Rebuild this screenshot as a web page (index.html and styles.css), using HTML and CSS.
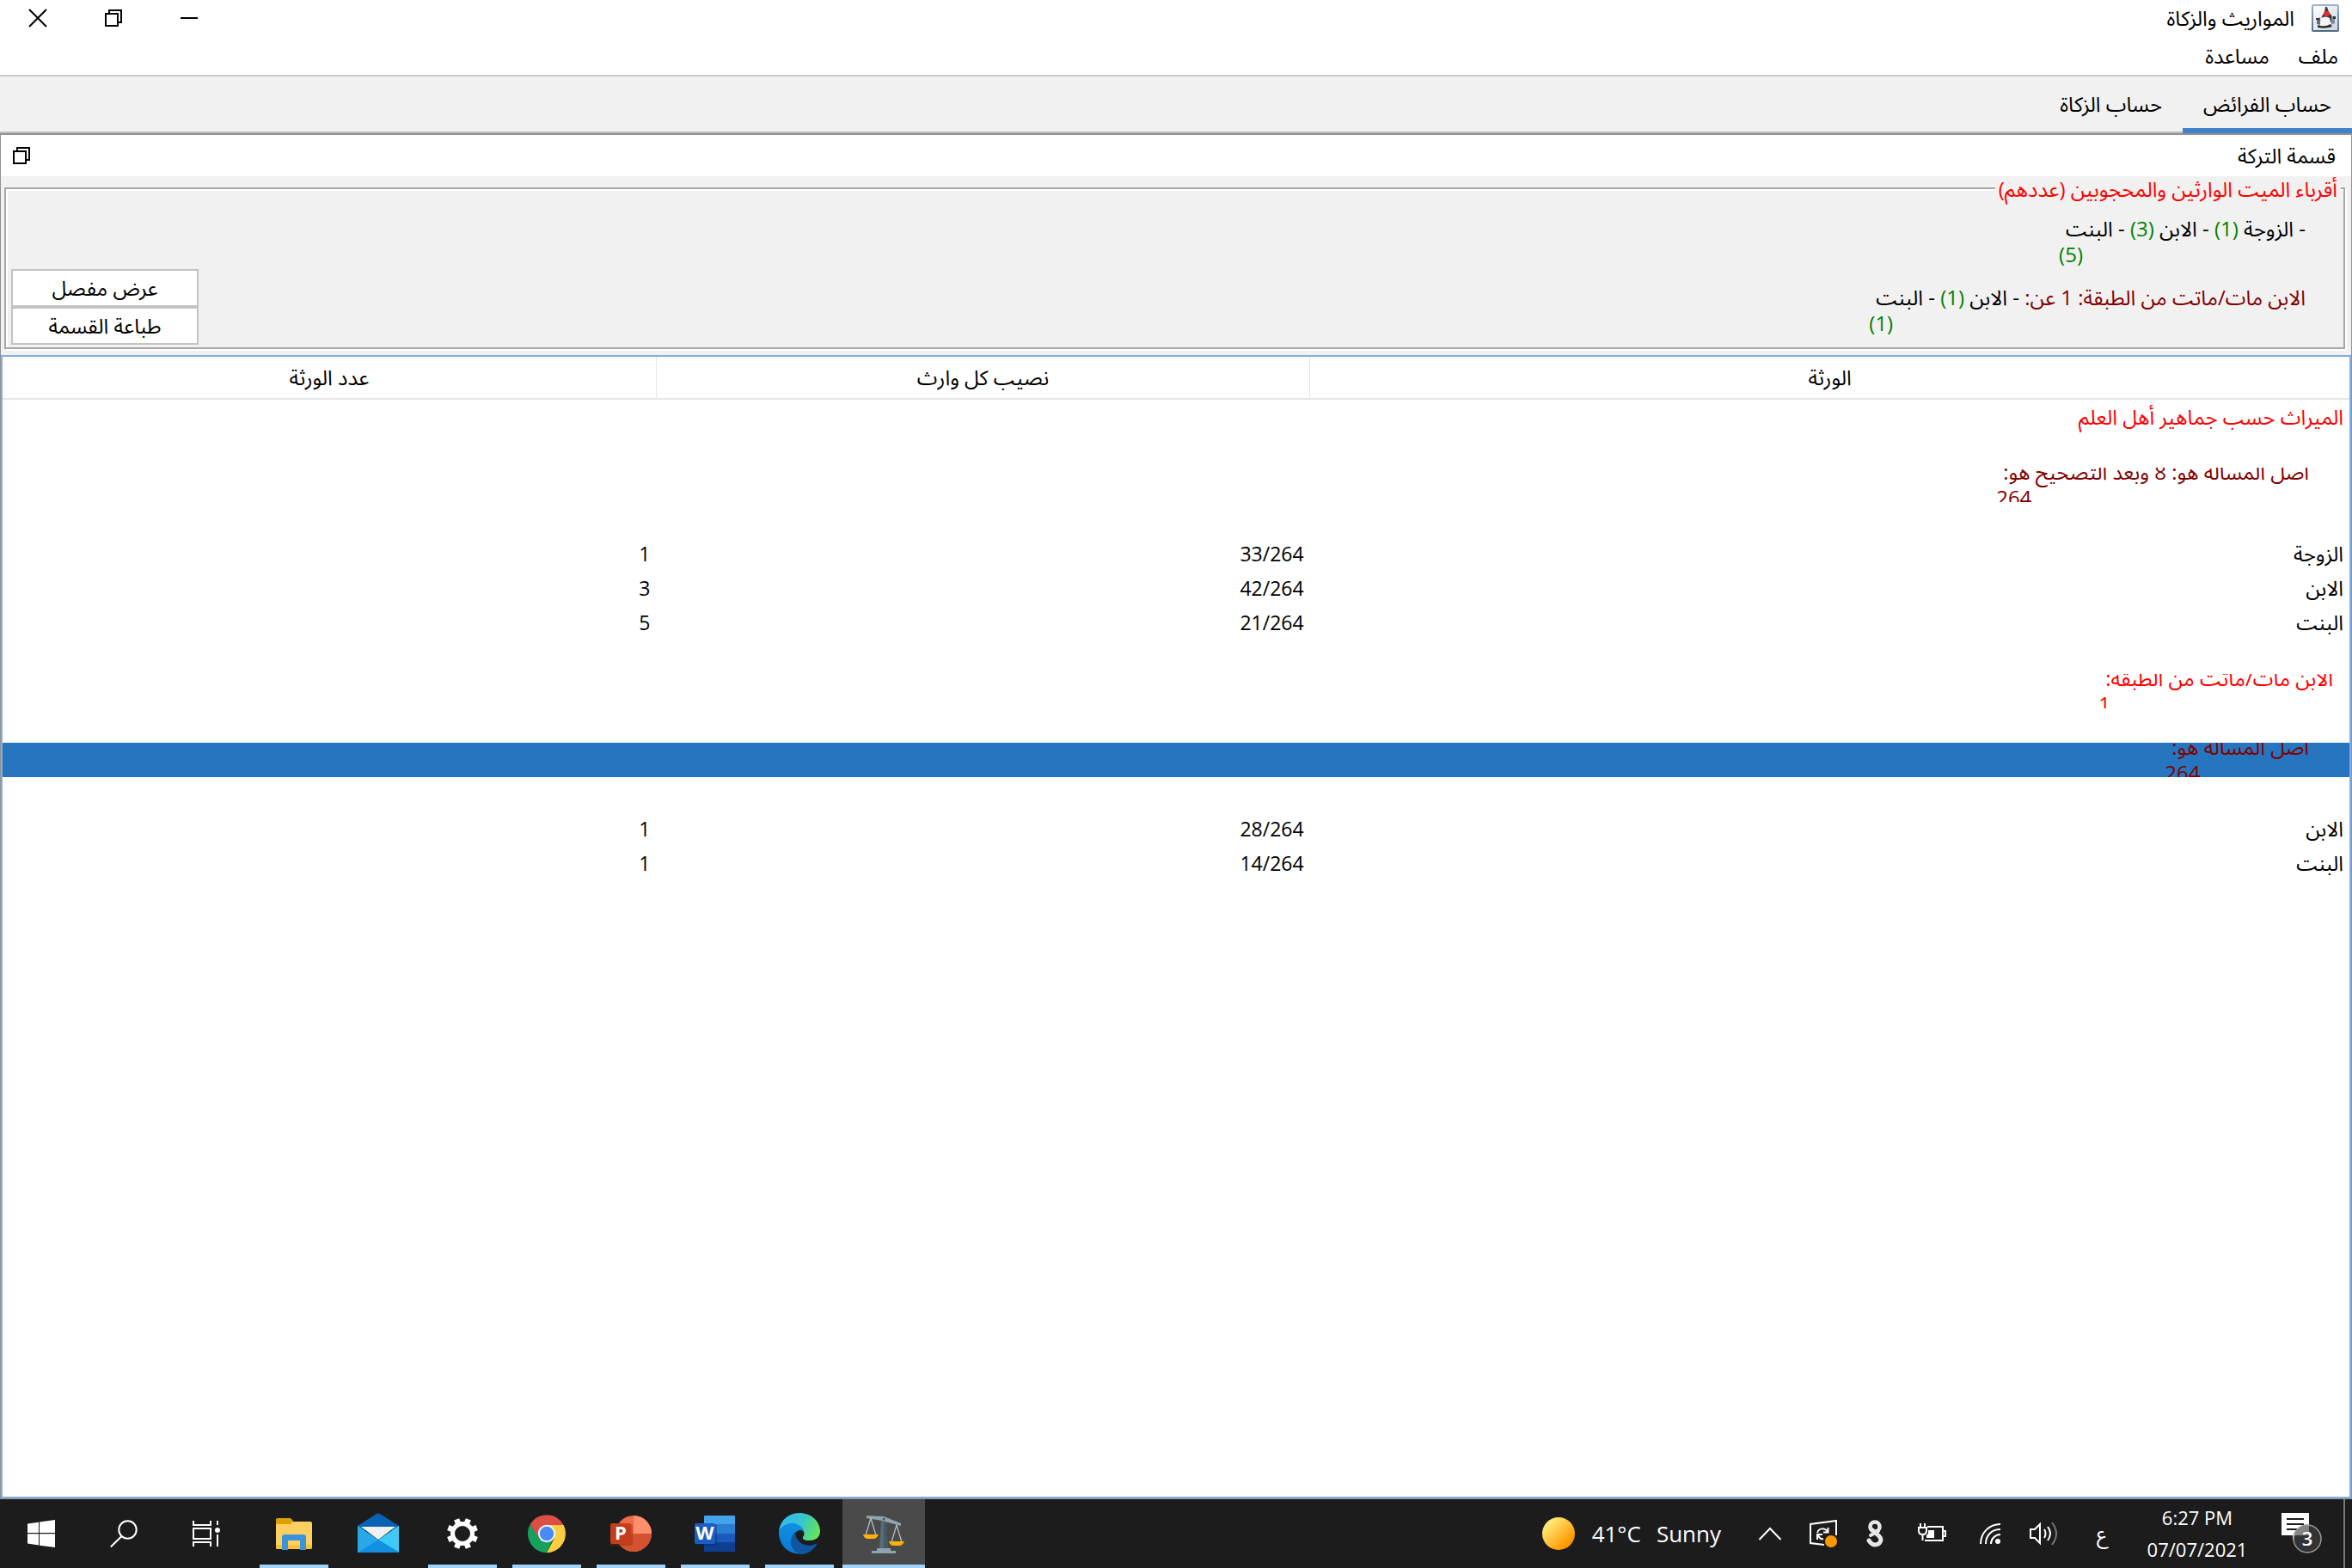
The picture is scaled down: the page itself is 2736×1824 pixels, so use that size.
FILE: index.html
```
<!DOCTYPE html>
<html lang="ar" dir="rtl">
<head>
<meta charset="utf-8">
<title>المواريث والزكاة</title>
<link rel="stylesheet" href="styles.css">
</head>
<body>
<header class="titlebar">
  <div class="app-name">
    <svg class="app-icon" width="32" height="32" viewBox="0 0 32 32" aria-hidden="true">
      <defs><linearGradient id="frame" x1="0" y1="0" x2="0" y2="1"><stop offset="0" stop-color="#9db4cb"/><stop offset="1" stop-color="#4c6a88"/></linearGradient>
      <linearGradient id="paper" x1="0" y1="0" x2="1" y2="1"><stop offset="0" stop-color="#fff"/><stop offset="1" stop-color="#cfd6dd"/></linearGradient></defs>
      <rect width="32" height="32" rx="2" fill="url(#frame)"/>
      <rect x="2" y="2" width="28" height="28" fill="url(#paper)"/>
      <path d="M16 3h2l2 6 4 5 2 5-4 2H10l2-7 3-5z" fill="#3a3a3a"/>
      <path d="M11 16q5-3 10 0l2 8q-6 4-14 1z" fill="#f4f4f4"/>
      <path d="M10 15l-4 3v5l4 1z" fill="#5e7082"/>
      <path d="M23 14l4 1v7l-4 2z" fill="#7b8fa3"/>
      <path d="M7 24q8 3 15-1l2 3q-8 3-17 1z" fill="#2e2e2e"/>
      <path d="M5 16h4v2H5zM25 14h3v3h-3z" fill="#333"/>
      <ellipse cx="17.500" cy="11" rx="3.500" ry="3" fill="#e52b2b"/>
    </svg>
    <span>المواريث والزكاة</span>
  </div>
  <div class="window-controls">
    <button class="icon-button" aria-label="تصغير"><svg width="22" height="22" viewBox="0 0 22 22"><path d="M1 11h20" stroke="#000" stroke-width="2"/></svg></button>
    <button class="icon-button" aria-label="استعادة"><svg width="22" height="22" viewBox="0 0 22 22"><path d="M2 6h14v14H2zM6 6V2h14v14h-4" fill="none" stroke="#000" stroke-width="2"/></svg></button>
    <button class="icon-button" aria-label="إغلاق"><svg width="22" height="22" viewBox="0 0 22 22"><path d="M1 1l20 20M21 1L1 21" stroke="#000" stroke-width="2"/></svg></button>
  </div>
</header>
<nav class="menubar">
  <button class="menu">ملف</button>
  <button class="menu">مساعدة</button>
</nav>
<nav class="tabs" role="tablist">
  <button class="tab tab-active" role="tab" aria-selected="true">حساب الفرائض</button>
  <button class="tab" role="tab" aria-selected="false">حساب الزكاة</button>
</nav>
<main class="frame">
  <div class="frame-title">
    <span>قسمة التركة</span>
    <button class="icon-button" aria-label="استعادة"><svg width="22" height="22" viewBox="0 0 22 22"><path d="M2 6h14v14H2zM6 6V2h14v14h-4" fill="none" stroke="#000" stroke-width="2"/></svg></button>
  </div>
  <div class="summary">
    <fieldset class="relatives">
      <legend>أقرباء الميت الوارثين والمحجوبين (عددهم)</legend>
      <div class="relatives-body">
        <div class="notes">
          <p class="note"><span class="note-first">- الزوجة <b>(1)</b> - الابن <b>(3)</b> - البنت</span><span class="note-rest"><b>(5)</b></span></p>
          <p class="note"><span class="note-first"><span class="maroon">الابن مات/ماتت من الطبقة: 1 عن:</span> - الابن <b>(1)</b> - البنت</span><span class="note-rest"><b>(1)</b></span></p>
        </div>
        <div class="actions">
          <button class="action">عرض مفصل</button>
          <button class="action">طباعة القسمة</button>
        </div>
      </div>
    </fieldset>
  </div>
  <div class="results">
    <table>
      <colgroup><col class="col-heirs"><col class="col-share"><col class="col-count"></colgroup>
      <thead><tr><th scope="col">الورثة</th><th scope="col">نصيب كل وارث</th><th scope="col">عدد الورثة</th></tr></thead>
      <tbody>
        <tr><td class="red">الميراث حسب جماهير أهل العلم</td><td></td><td></td></tr>
        <tr><td></td><td></td><td></td></tr>
        <tr><td><div class="clip indent maroon"><div class="note"><span class="note-first">أصل المسألة هو: 8 وبعد التصحيح هو:</span><span class="note-rest">264</span></div></div></td><td></td><td></td></tr>
        <tr><td></td><td></td><td></td></tr>
        <tr><td>الزوجة</td><td class="num">33/264</td><td class="num">1</td></tr>
        <tr><td>الابن</td><td class="num">42/264</td><td class="num">3</td></tr>
        <tr><td>البنت</td><td class="num">21/264</td><td class="num">5</td></tr>
        <tr><td></td><td></td><td></td></tr>
        <tr><td><div class="clip clip-near red"><div class="note"><span class="note-first">الابن مات/ماتت من الطبقة:</span><span class="note-rest">1</span></div></div></td><td></td><td></td></tr>
        <tr><td></td><td></td><td></td></tr>
        <tr class="selected"><td><div class="clip indent maroon"><div class="note"><span class="note-first">أصل المسألة هو:</span><span class="note-rest">264</span></div></div></td><td></td><td></td></tr>
        <tr><td></td><td></td><td></td></tr>
        <tr><td>الابن</td><td class="num">28/264</td><td class="num">1</td></tr>
        <tr><td>البنت</td><td class="num">14/264</td><td class="num">1</td></tr>
      </tbody>
    </table>
  </div>
</main>
<footer class="taskbar" dir="ltr" lang="en">
  <div class="launch">
    <button class="task" aria-label="Start"><svg width="32" height="32" viewBox="0 0 32 32" fill="#fff"><path d="M0 4.500L13 2.700V15H0zM14 2.500L32 0V15H14zM0 16.300H13V29.500L0 27.500zM14 16.300H32V32L14 29.700z"/></svg></button>
    <button class="task" aria-label="Search"><svg width="32" height="32" viewBox="0 0 32 32" fill="none" stroke="#fff" stroke-width="2"><circle cx="20.500" cy="11.500" r="10.200"/><path d="M13.500 19L.8 31.500"/></svg></button>
    <button class="task" aria-label="Task view"><svg width="32" height="32" viewBox="0 0 32 32" fill="none" stroke="#fff" stroke-width="2"><path d="M1 1v5h20V1M1 10h20v12H1zM1 31v-5h20v5M29 1v5M29 17v14"/><circle cx="29" cy="12" r="3" fill="#fff" stroke="none"/></svg></button>
  </div>
  <div class="apps">
    <button class="task running" aria-label="File Explorer"><svg width="48" height="48" viewBox="0 0 48 48"><path d="M3 7h16l4 3h20q2 0 2 2v28q0 2-2 2H5q-2 0-2-2z" fill="#fdd061"/><path d="M3 8q0-2 2-2h15l3 3-3 4H3z" fill="#dda001"/><path d="M3 37h42v3q0 2-2 2H5q-2 0-2-2z" fill="#f9c136"/><path d="M10 43V28q0-3 3-3h22q3 0 3 3v15h-7V32H17v11z" fill="#3a94db"/></svg></button>
    <button class="task" aria-label="Mail"><svg width="48" height="48" viewBox="0 0 48 48"><path d="M0 15L22 1q2-1 4 0l22 14v5H0z" fill="#0862b4"/><path d="M0 15l24 17L48 15v31H0z" fill="#28aeea"/><path d="M4 16h40L24 31z" fill="#f0f0f0"/><path d="M48 15v30L24 31z" fill="#3dcaf5"/><path d="M0 46l24-15 24 15z" fill="#118fe0"/><path d="M0 15v31l24-15z" fill="#28a8e8"/></svg></button>
    <button class="task running" aria-label="Settings"><svg width="48" height="48" viewBox="0 0 48 48" fill="none" stroke="#fff"><circle cx="24" cy="24" r="11.500" stroke-width="5"/><g stroke-width="6.500"><path d="M24 11V6" transform="rotate(22.5 24 24)"/><path d="M24 11V6" transform="rotate(67.5 24 24)"/><path d="M24 11V6" transform="rotate(112.5 24 24)"/><path d="M24 11V6" transform="rotate(157.5 24 24)"/><path d="M24 11V6" transform="rotate(202.5 24 24)"/><path d="M24 11V6" transform="rotate(247.5 24 24)"/><path d="M24 11V6" transform="rotate(292.5 24 24)"/><path d="M24 11V6" transform="rotate(337.5 24 24)"/></g></svg></button>
    <button class="task running" aria-label="Chrome"><svg width="48" height="48" viewBox="0 0 48 48"><path d="M24 24L4.900 13A22.200 22.200 0 0 1 43.500 14z" fill="#db4f45"/><path d="M24 24L43.500 14A22.200 22.200 0 0 1 24 46.200L33 29z" fill="#ffcd41"/><path d="M24 14H43.500L44 18 30 30z" fill="#ffcd41"/><path d="M4.900 13L15.500 30 24 34 31 31 24 46.200A22.200 22.200 0 0 1 4.900 13z" fill="#17a15d"/><path d="M4.900 13L14 28l3-14z" fill="#db4f45"/><circle cx="24" cy="24" r="10.200" fill="#f1f3f4"/><circle cx="24" cy="24" r="8.200" fill="#4a8af4"/></svg></button>
    <button class="task running" aria-label="PowerPoint"><svg width="48" height="48" viewBox="0 0 48 48"><circle cx="27" cy="24" r="21" fill="#ed6c47"/><path d="M27 24V3a21 21 0 0 1 21 21z" fill="#ff8f6b"/><path d="M48 24a21 21 0 0 1-42 0z" fill="#d35230"/><rect y="13" width="26" height="25" rx="2" fill="#7d2b16" opacity=".4"/><rect y="12" width="24" height="24" rx="2" fill="#c43e1c"/><text x="12" y="31" text-anchor="middle" class="logo-letter">P</text></svg></button>
    <button class="task running" aria-label="Word"><svg width="48" height="48" viewBox="0 0 48 48"><rect x="11" y="3" width="36" height="42" rx="1" fill="#41a5ee"/><path d="M11 13h36v11H11z" fill="#2b7cd3"/><path d="M11 24h36v10H11z" fill="#185abd"/><path d="M11 34h36v10q0 1-1 1H12q-1 0-1-1z" fill="#103f91"/><rect y="13" width="26" height="25" rx="2" fill="#0b2a66" opacity=".4"/><rect y="12" width="24" height="24" rx="2" fill="#1d5cc0"/><text x="12" y="31" text-anchor="middle" class="logo-letter">W</text></svg></button>
    <button class="task running" aria-label="Edge"><svg width="48" height="48" viewBox="0 0 48 48"><defs><linearGradient id="edge-top" x1="0" y1=".3" x2="1" y2=".6"><stop offset="0" stop-color="#35b8f0"/><stop offset=".5" stop-color="#35c4d0"/><stop offset="1" stop-color="#66e455"/></linearGradient><linearGradient id="edge-body" x1="0" y1="0" x2="0" y2="1"><stop offset="0" stop-color="#1290e0"/><stop offset="1" stop-color="#0a78d8"/></linearGradient></defs><path d="M0 22C1 8 12 0 24 0c14 0 24 10 24 21 0 7-5 11-12 11-5 0-9-1-8-4 3-4 1-8-3-11C18 10 5 12 0 22z" fill="url(#edge-top)"/><path d="M0 22c4-9 15-13 23-8 4 2 6 5 6 8-4-5-12 0-12 8 0 9 7 14 13 17C14 50 0 40 0 22z" fill="url(#edge-body)"/><path d="M19 22c-8 8-7 22 7 26 8 0 14-5 18-11 1-1 0-2-1-1-12 5-24-2-24-14z" fill="#0f559f"/></svg></button>
    <button class="task running current" aria-label="المواريث والزكاة"><svg width="48" height="48" viewBox="0 0 48 48"><path d="M21 9h6l2 34H19z" fill="#546e7a"/><path d="M24 9h3l2 34h-5z" fill="#455a64"/><path d="M16 41h16v4H16zM10 44h28v3H10z" fill="#90a4ae"/><path d="M4 3l20 1 20 8v3l-4-1-18-5-18-3z" fill="#90a4ae"/><circle cx="24" cy="7" r="1.500" fill="#455a64"/><path d="M9 6L3 26M9 6l6 20M39 14l-6 20M39 14l6 20" stroke="#b0bec5" stroke-width="1.300" fill="none"/><path d="M0 25h18q-2 5-6 5H6q-5 0-6-5zM30 33h18q-2 5-6 5h-6q-5 0-6-5z" fill="#ffb300"/></svg></button>
  </div>
  <div class="tray">
    <button class="weather"><svg width="38" height="38" viewBox="0 0 38 38"><defs><linearGradient id="sun" x1=".15" y1=".15" x2=".85" y2=".85"><stop offset=".1" stop-color="#ffe670"/><stop offset=".9" stop-color="#ff9800"/></linearGradient></defs><circle cx="19" cy="19" r="19" fill="url(#sun)"/></svg><span>41°C</span><span>Sunny</span></button>
    <button class="tray-item" aria-label="Show hidden icons"><svg width="28" height="16" viewBox="0 0 28 16" fill="none" stroke="#fff" stroke-width="2"><path d="M1.500 15L14 2l12.500 13"/></svg></button>
    <button class="tray-item" aria-label="Windows Update"><svg width="32" height="32" viewBox="0 0 32 32" fill="none" stroke="#fff" stroke-width="2"><path d="M31 18V1L1 5v22l16 2"/><path d="M9 15c2-6 9-6 12-1M21.500 9v5.500H16M16 22c-2 1-4 0-6-4M9 23v-6h6"/><circle cx="25" cy="25" r="7" fill="#ff9800" stroke="none"/></svg></button>
    <button class="tray-item tray-small" aria-label="Sync"><svg width="20" height="32" viewBox="0 0 20 32" fill="none" stroke="#e6e6e6" stroke-width="5" stroke-linecap="round"><circle cx="10" cy="8" r="5.500" stroke-width="4.500"/><path d="M6 11l9 8c4 4 1 10-5 10-3 0-5-2-7-5"/><path d="M14 13l-9 5" stroke-width="4"/></svg></button>
    <button class="tray-item tray-wide" aria-label="Battery"><svg width="34" height="26" viewBox="0 0 34 26" fill="none" stroke="#fff" stroke-width="2"><path d="M12 5h18v16H9M30 10h3v6h-3M4 1v5M9 1v5M2 6h9v4q0 4-4.500 4T2 10zM6.500 14v7"/><path d="M13 9h7v9h-9v-3l2-2z" fill="#fff" stroke="none"/></svg></button>
    <button class="tray-item" aria-label="Wi-Fi"><svg width="24" height="24" viewBox="0 0 24 24" fill="none" stroke="#fff" stroke-width="2"><path d="M1 24C1 11 11 1 24 1M7 24C7 14 14 7 24 7M13 24c0-6 5-11 11-11"/><circle cx="21" cy="21" r="3" fill="#fff" stroke="none"/></svg></button>
    <button class="tray-item" aria-label="Volume"><svg width="32" height="28" viewBox="0 0 32 28" fill="none" stroke="#fff" stroke-width="2"><path d="M1 9h5l6-6v22l-6-6H1zM17 9q3 5 0 10M21 6q6 8 0 16"/><path d="M26 1q10 13 0 26" stroke="#777"/></svg></button>
    <button class="tray-item tray-wide language" lang="ar">ع</button>
    <button class="clock"><span>6:27 PM</span><span>07/07/2021</span></button>
    <button class="tray-item notices" aria-label="3 notifications"><svg width="48" height="48" viewBox="0 0 48 48"><path d="M0 0h32v26H18l-5 6V26H0z" fill="#fff"/><path d="M6 7h20M6 13h20M6 19h14" stroke="#1c1c1c" stroke-width="2"/><circle cx="30" cy="30" r="16" fill="#333" stroke="#999" stroke-width="1.500"/><path d="M14 27a16 16 0 0 1 18-13v12H18z" fill="#999" opacity=".8"/><text x="30" y="38" text-anchor="middle" class="badge-text">3</text></svg></button>
    <button class="show-desktop" aria-label="Show desktop"></button>
  </div>
</footer>
</body>
</html>
```
FILE: styles.css
```
* { box-sizing: border-box; }

body {
  margin: 0;
  min-height: 100vh;
  display: flex;
  flex-direction: column;
  background: #fff;
  color: #000;
  font: 24px/30px "Open Sans", "Noto Sans Arabic", "DejaVu Sans", sans-serif;
}

button {
  margin: 0;
  padding: 0;
  border: 0;
  background: none;
  color: inherit;
  font: inherit;
}

svg { display: block; flex: none; }
b { font-weight: 400; color: #008000; }
.red { color: #f00; }
.maroon { color: #800000; }

.titlebar {
  height: 42px;
  display: flex;
  align-items: center;
  justify-content: space-between;
  padding: 0 15px 0 0;
}
.app-name { display: flex; align-items: center; gap: 20px; }
.window-controls { display: flex; }
.window-controls .icon-button { width: 88px; display: grid; place-items: center; }

.menubar {
  height: 47px;
  display: flex;
  align-items: center;
  gap: 34px;
  padding: 0 16px;
  border-bottom: 2px solid #ccc;
}

.tabs {
  height: 66px;
  display: flex;
  background: #f1f1f1;
  box-shadow: inset 0 -2px #bbb;
}
.tab { padding: 4px 24px 0; border-bottom: 6px solid transparent; }
.tab-active { border-bottom-color: #4082c8; }

.frame {
  flex: 1;
  display: flex;
  flex-direction: column;
  border: 1px solid #929292;
  border-top-width: 2px;
}
.frame-title {
  height: 48px;
  display: flex;
  align-items: center;
  justify-content: space-between;
  padding: 0 18px 0 13px;
}

.summary { padding: 0 7px 7px 4px; background: #f1f1f1; }
.relatives {
  margin: 0;
  padding: 0;
  min-width: 0;
  border: 2px solid #a7a7a7;
  box-shadow: 2px 2px #fff, inset 2px 2px #fff;
}
.relatives legend {
  height: 28px;
  margin: 0 3px;
  padding: 0 4px;
  line-height: 30px;
  background: #f1f1f1;
  color: #f00;
}
.relatives-body {
  display: flex;
  justify-content: space-between;
  align-items: flex-end;
}
.notes {
  display: flex;
  flex-direction: column;
  gap: 20px;
  padding: 18px 44px 13px 0;
}
.note { width: max-content; margin: 0; }
.note-first, .note-rest { display: block; }
.note-first { padding-left: 8px; }
.note-rest { text-align: left; }

.actions {
  width: 224px;
  display: flex;
  flex-direction: column;
  padding: 0 0 3px 6px;
}
.action { height: 44px; border: 2px solid #c3c3c3; background: #fff; }

.results { flex: 1; border: 2px solid #84acdd; }
table { width: 100%; border-collapse: collapse; table-layout: fixed; }
.col-heirs { width: 44.3%; }
th {
  height: 49px;
  padding: 0;
  font-weight: 400;
  border-bottom: 2px solid #e5e5e5;
  border-left: 1px solid #e5e5e5;
}
th:last-child { border-left: 0; }
td { height: 40px; padding: 0 7px; text-align: right; }
.num { direction: ltr; font-size: 23px; }
.selected { background: #2675bf; }
.clip {
  height: 40px;
  display: flex;
  align-items: center;
  overflow: hidden;
}
.indent { padding-right: 40px; }
.clip-near { padding-right: 12px; }

.taskbar {
  height: 80px;
  display: flex;
  background: #1c1c1c;
  color: #fff;
}
.launch, .apps, .tray { display: flex; }
.launch { margin-right: 6px; }
.apps { gap: 2px; }
.task {
  width: 96px;
  display: grid;
  place-items: center;
}
.running {
  background: linear-gradient(#a0d2fb, #a0d2fb) center bottom / 80px 4px no-repeat;
}
.current { background-color: #4a4a4a; background-size: 100% 4px; }
.logo-letter { font: 700 22px "Open Sans", sans-serif; fill: #fff; }

.tray { margin-left: auto; align-items: stretch; }
.weather {
  display: flex;
  align-items: center;
  gap: 18px;
  padding: 0 26px 0 22px;
  font-size: 26px;
}
.weather svg { margin-right: 2px; }
.tray-item {
  width: 62px;
  display: grid;
  place-items: center;
}
.tray-small { width: 58px; }
.tray-wide { width: 74px; }
.clock {
  width: 148px;
  display: flex;
  flex-direction: column;
  justify-content: center;
  font-size: 22px;
  line-height: 37px;
}
.notices { width: 96px; }
.badge-text { font: 600 22px "Open Sans", sans-serif; fill: #fff; }
.show-desktop { width: 10px; border-left: 2px solid #777; }
```
